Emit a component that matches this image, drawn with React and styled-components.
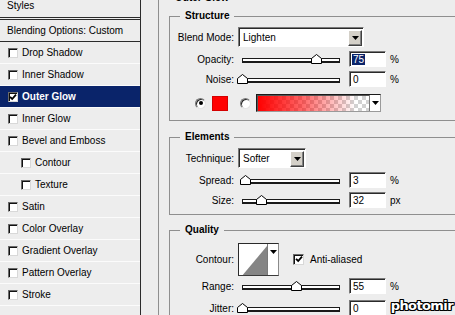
import React from "react";
import styled, { createGlobalStyle } from "styled-components";

const BG = "#ededed";
const NAVY = "#0a246a";

const GlobalStyle = createGlobalStyle`
  html, body {
    margin: 0;
    padding: 0;
    background: ${BG};
  }
  body {
    font-family: "Liberation Sans", Arial, sans-serif;
    font-size: 10px;
    color: #000;
  }
`;

const Window = styled.div`
  position: relative;
  display: flex;
  width: 455px;
  height: 315px;
  overflow: hidden;
  background: ${BG};
`;

/* ---- left: styles list ---- */

const StylesPanel = styled.div`
  width: 140px;
  flex-shrink: 0;
  display: flex;
  flex-direction: column;
  border-right: 1px solid #2b2b2b;
`;

const PanelHeader = styled.div`
  height: 17px;
  padding-left: 7px;
  line-height: 12px;
  border-bottom: 3px double #2b2b2b;
`;

const BlendingRow = styled.div`
  height: 21px;
  display: flex;
  align-items: center;
  padding-left: 7px;
  border-bottom: 1px solid #2b2b2b;
`;

const StyleItem = styled.div`
  height: 21px;
  display: flex;
  align-items: center;
  gap: 4px;
  padding-left: ${(p) => (p.$sub ? 21 : 8)}px;
  border-bottom: 1px solid #fbfbfb;
  background: ${(p) => (p.$selected ? NAVY : "transparent")};
  color: ${(p) => (p.$selected ? "#fff" : "#000")};
  font-weight: ${(p) => (p.$selected ? "bold" : "normal")};
`;

const CheckBox = styled.span`
  width: ${(p) => p.$size || 10}px;
  height: ${(p) => p.$size || 10}px;
  flex-shrink: 0;
  box-sizing: border-box;
  display: flex;
  align-items: center;
  justify-content: center;
  background: #fff;
  border: 1px solid;
  border-color: #6a6a6a #d8d8d8 #d8d8d8 #6a6a6a;
  box-shadow: inset 1px 1px 0 #111;
`;

/* ---- right: settings ---- */

const RightPane = styled.div`
  flex: 1;
  min-width: 0;
  padding-left: 17px;
`;

const OuterGroup = styled.fieldset`
  margin: -8px 0 0 0;
  padding: 6px 0 0 10px;
  width: 330px;
  min-width: 0;
  border: 0;
  border-top: 1px solid #8f8f8f;
  border-left: 1px solid #8f8f8f;
`;

const Legend = styled.legend`
  margin-left: ${(p) => p.$ml || 10}px;
  padding: 0 5px;
  line-height: 12px;
  font-weight: bold;
`;

const Group = styled.fieldset`
  margin: ${(p) => p.$mt || 0}px 0 0 0;
  padding: ${(p) => p.$pt}px 0 ${(p) => p.$pb}px 0;
  width: 300px;
  min-width: 0;
  border: 1px solid #8f8f8f;
`;

const Row = styled.div`
  display: flex;
  align-items: center;
  height: ${(p) => p.$h || 20}px;
  margin-top: ${(p) => p.$mt || 0}px;
  padding-left: ${(p) => p.$pl || 0}px;
`;

const Label = styled.span`
  width: 64px;
  flex-shrink: 0;
  margin-right: 4px;
  text-align: right;
`;

const Sunken = `
  box-sizing: border-box;
  background: #fff;
  border: 1px solid;
  border-color: #7a7a7a #fff #fff #7a7a7a;
  box-shadow: inset 1px 1px 0 #2a2a2a;
`;

const Select = styled.div`
  ${Sunken}
  width: ${(p) => p.$w}px;
  height: 20px;
  display: flex;
  align-items: center;
  justify-content: space-between;
  padding: 2px 1px 1px 4px;
`;

const DropButton = styled.span`
  width: 14px;
  height: 16px;
  box-sizing: border-box;
  display: flex;
  align-items: center;
  justify-content: center;
  background: #d4d0c8;
  border: 1px solid;
  border-color: #fff #404040 #404040 #fff;
  box-shadow: inset -1px -1px 0 #808080;
`;

const SliderBox = styled.div`
  position: relative;
  width: 98px;
  height: 10px;
  margin: 0 9px 0 4px;
  flex-shrink: 0;
`;

const Track = styled.div`
  margin-top: 4px;
  height: 5px;
  box-sizing: border-box;
  background: #fff;
  border: 1px solid #1a1a1a;
  border-bottom-width: 2px;
`;

const Thumb = styled.svg`
  position: absolute;
  top: 0;
`;

const NumField = styled.div`
  ${Sunken}
  width: 37px;
  height: 16px;
  display: flex;
  align-items: center;
  padding-left: 3px;
`;

const Selected = styled.span`
  background: ${NAVY};
  color: #fff;
  padding: 0 1px;
  margin-left: -1px;
`;

const Unit = styled.span`
  margin-left: 4px;
`;

const Radio = styled.span`
  width: 11px;
  height: 11px;
  flex-shrink: 0;
  box-sizing: border-box;
  border-radius: 50%;
  display: flex;
  align-items: center;
  justify-content: center;
  margin-left: ${(p) => p.$ml || 0}px;
  background: #fff;
  border: 1px solid;
  border-color: #7a7a7a #e4e4e4 #e4e4e4 #7a7a7a;
  box-shadow: inset 1px 1px 0 #2a2a2a;
  &::after {
    content: "";
    width: 4px;
    height: 4px;
    border-radius: 50%;
    background: ${(p) => (p.$checked ? "#000" : "transparent")};
  }
`;

const Swatch = styled.span`
  width: 16px;
  height: 15px;
  margin-left: 6px;
  box-sizing: border-box;
  background: #ff0000;
  border: 1px solid #d40000;
`;

const GradientPicker = styled.div`
  width: 125px;
  height: 18px;
  margin-left: 5px;
  box-sizing: border-box;
  display: flex;
  border: 1px solid;
  border-color: #1a1a1a #9a9a9a #9a9a9a #1a1a1a;
  box-shadow: inset 1px 1px 0 #555;
`;

const GradientFill = styled.div`
  flex: 1;
  margin: 1px 0 0 1px;
  background:
    linear-gradient(to right, #ff0000 0%, rgba(255, 0, 0, 0.6) 40%, rgba(255, 0, 0, 0) 88%),
    repeating-conic-gradient(#ffffff 0 25%, #d2d2d2 0 50%) 0 0 / 8px 8px;
`;

const ArrowCell = styled.span`
  width: 11px;
  flex-shrink: 0;
  display: flex;
  justify-content: center;
  align-items: ${(p) => (p.$top ? "flex-start" : "center")};
  padding-top: ${(p) => (p.$top ? 6 : 0)}px;
  box-sizing: border-box;
  background: #fff;
  border-left: 1px solid #7a7a7a;
`;

const ContourPicker = styled.div`
  width: 41px;
  height: 33px;
  box-sizing: border-box;
  display: flex;
  background: #fff;
  border: 1px solid #2a2a2a;
  border-right-color: #8a8a8a;
  border-bottom-color: #3a3a3a;
`;

const ContourPreview = styled.svg`
  flex: 1;
  display: block;
`;

const CheckOption = styled.label`
  display: flex;
  align-items: center;
  gap: 6px;
  margin-left: 14px;
`;

const Watermark = styled.div`
  position: absolute;
  right: 2px;
  bottom: 2px;
  font-family: "DejaVu Sans", sans-serif;
  font-weight: bold;
  font-size: 13px;
  letter-spacing: -0.6px;
  color: #fff;
  text-shadow: -1px -1px 0 #000, 1px -1px 0 #000, -1px 1px 0 #000, 1px 1px 0 #000,
    0 -1px 0 #000, 0 1px 0 #000, -1px 0 0 #000, 1px 0 0 #000;
`;

const Tri = () => (
  <svg width="7" height="4" viewBox="0 0 7 4">
    <polygon points="0,0 7,0 3.5,4" fill="#000" />
  </svg>
);

const Check = () => (
  <svg width="8" height="8" viewBox="0 0 8 8">
    <path d="M1 3.8 L3.2 6 L7 1.6" fill="none" stroke="#000" strokeWidth="1.8" />
  </svg>
);

const Slider = ({ pos }) => (
  <SliderBox>
    <Track />
    <Thumb width="11" height="10" viewBox="0 0 11 10" style={{ left: pos * 98 - 5 }}>
      <polygon points="0.5,9.5 0.5,4.5 5.5,0.5 10.5,4.5 10.5,9.5" fill="#fff" stroke="#000" />
    </Thumb>
  </SliderBox>
);

const SliderRow = ({ label, pos, value, unit, selected, mt }) => (
  <Row $mt={mt}>
    <Label>{label}</Label>
    <Slider pos={pos} />
    <NumField>{selected ? <Selected>{value}</Selected> : value}</NumField>
    {unit && <Unit>{unit}</Unit>}
  </Row>
);

const styleItems = [
  { label: "Drop Shadow" },
  { label: "Inner Shadow" },
  { label: "Outer Glow", checked: true, selected: true },
  { label: "Inner Glow" },
  { label: "Bevel and Emboss" },
  { label: "Contour", sub: true },
  { label: "Texture", sub: true },
  { label: "Satin" },
  { label: "Color Overlay" },
  { label: "Gradient Overlay" },
  { label: "Pattern Overlay" },
  { label: "Stroke" },
];

export default function App() {
  return (
    <>
      <GlobalStyle />
      <Window>
        <StylesPanel>
          <PanelHeader>Styles</PanelHeader>
          <BlendingRow>Blending Options: Custom</BlendingRow>
          {styleItems.map((item) => (
            <StyleItem key={item.label} $sub={item.sub} $selected={item.selected}>
              <CheckBox>{item.checked && <Check />}</CheckBox>
              {item.label}
            </StyleItem>
          ))}
        </StylesPanel>

        <RightPane>
          <OuterGroup>
            <Legend $ml={1}>Outer Glow</Legend>

            <Group $pt={5} $pb={6}>
              <Legend>Structure</Legend>
              <Row>
                <Label>Blend Mode:</Label>
                <Select $w={126}>
                  Lighten
                  <DropButton>
                    <Tri />
                  </DropButton>
                </Select>
              </Row>
              <SliderRow label="Opacity:" pos={0.75} value="75" unit="%" selected mt={2} />
              <SliderRow label="Noise:" pos={0} value="0" unit="%" />
              <Row $h={22} $mt={3} $pl={25}>
                <Radio $checked />
                <Swatch />
                <Radio $ml={12} />
                <GradientPicker>
                  <GradientFill />
                  <ArrowCell>
                    <Tri />
                  </ArrowCell>
                </GradientPicker>
              </Row>
            </Group>

            <Group $mt={10} $pt={5} $pb={4}>
              <Legend>Elements</Legend>
              <Row>
                <Label>Technique:</Label>
                <Select $w={68}>
                  Softer
                  <DropButton>
                    <Tri />
                  </DropButton>
                </Select>
              </Row>
              <SliderRow label="Spread:" pos={0.03} value="3" unit="%" mt={2} />
              <SliderRow label="Size:" pos={0.19} value="32" unit="px" />
            </Group>

            <Group $mt={9} $pt={6} $pb={0}>
              <Legend>Quality</Legend>
              <Row $h={34}>
                <Label>Contour:</Label>
                <ContourPicker>
                  <ContourPreview viewBox="0 0 30 31" preserveAspectRatio="none">
                    <polygon points="4,31 30,2 30,31" fill="#858585" />
                  </ContourPreview>
                  <ArrowCell $top>
                    <Tri />
                  </ArrowCell>
                </ContourPicker>
                <CheckOption>
                  <CheckBox $size={11}>
                    <Check />
                  </CheckBox>
                  Anti-aliased
                </CheckOption>
              </Row>
              <SliderRow label="Range:" pos={0.55} value="55" unit="%" />
              <SliderRow label="Jitter:" pos={0} value="0" mt={2} />
            </Group>
          </OuterGroup>
        </RightPane>

        <Watermark>photomir</Watermark>
      </Window>
    </>
  );
}
